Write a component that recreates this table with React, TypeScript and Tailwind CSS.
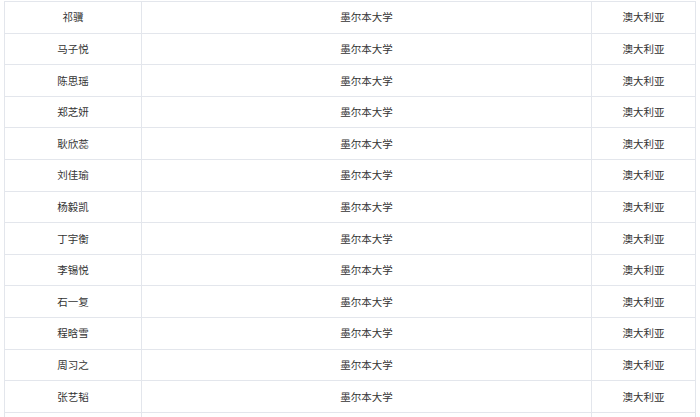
const names = [
  '祁骥',
  '马子悦',
  '陈思瑶',
  '郑芝妍',
  '耿欣蕊',
  '刘佳瑜',
  '杨毅凯',
  '丁宇衡',
  '李锡悦',
  '石一复',
  '程晗雪',
  '周习之',
  '张艺韬',
];

export default function App() {
  return (
    <div
      className="h-[417px] w-[700px] overflow-hidden bg-white pt-px pl-[4px] text-[10.5px] text-[#333]"
      style={{ fontFamily: '"Noto Sans CJK SC", "Noto Sans", sans-serif' }}
    >
      <div className="w-[692px] border-t border-l border-r border-[#e3e6ec]">
        {names.map((name) => (
          <div key={name} className="grid h-[31.6px] grid-cols-[137px_450px_1fr] border-b border-[#e3e6ec]">
            <div className="flex items-center justify-center border-r border-[#e3e6ec]">{name}</div>
            <div className="flex items-center justify-center border-r border-[#e3e6ec]">墨尔本大学</div>
            <div className="flex items-center justify-center">澳大利亚</div>
          </div>
        ))}
        {/* next row, clipped by the viewport */}
        <div className="grid h-[31.6px] grid-cols-[137px_450px_1fr]">
          <div className="border-r border-[#e3e6ec]" />
          <div className="border-r border-[#e3e6ec]" />
          <div />
        </div>
      </div>
    </div>
  );
}
